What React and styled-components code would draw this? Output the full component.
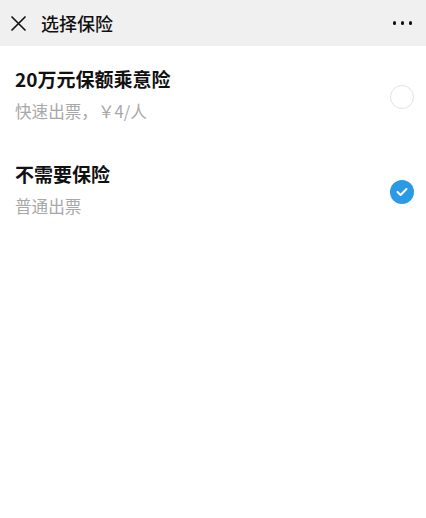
import React, { useState } from "react";
import styled, { createGlobalStyle } from "styled-components";

const Global = createGlobalStyle`
  html, body { margin: 0; padding: 0; background: #ffffff; }
  body { font-family: "Noto Sans CJK SC", "Noto Sans", sans-serif; }
`;

const Page = styled.div`
  width: 426px;
  min-height: 518px;
  background: #fff;
`;

const Header = styled.header`
  height: 46px;
  background: #f0f0f0;
  display: flex;
  align-items: center;
  padding: 0 14px 0 10px;
  box-sizing: border-box;
`;

const IconBtn = styled.span`
  display: flex;
  align-items: center;
  justify-content: center;
  width: 17px;
  height: 17px;
  margin-right: 14px;
`;

const Title = styled.h1`
  flex: 1;
  margin: 0;
  font-size: 18px;
  font-weight: 500;
  color: #111;
  line-height: 24px;
`;

const More = styled.span`
  display: flex;
  gap: 4.5px;
  align-items: center;
`;

const Dot = styled.i`
  width: 3.5px;
  height: 3.5px;
  border-radius: 50%;
  background: #111;
`;

const Item = styled.div`
  height: 95px;
  display: flex;
  align-items: center;
  padding: 0 12px 0 15px;
  box-sizing: border-box;
  cursor: pointer;
`;

const Texts = styled.div`
  flex: 1;
  display: flex;
  flex-direction: column;
  gap: 9px;
  margin-top: 2px;
`;

const ItemTitle = styled.div`
  font-size: 19px;
  font-weight: 700;
  color: #111;
  line-height: 24px;
`;

const ItemSub = styled.div`
  font-size: 16.6px;
  color: #a8a8a8;
  line-height: 22px;
`;

const Radio = styled.span`
  width: 24px;
  height: 24px;
  border-radius: 50%;
  box-sizing: border-box;
  margin-top: 6px;
  display: flex;
  align-items: center;
  justify-content: center;
  border: ${(p) => (p.$checked ? "none" : "1.5px solid #e2e2e2")};
  background: ${(p) => (p.$checked ? "#2a9ae6" : "#fff")};
`;

const options = [
  { title: "20万元保额乘意险", sub: "快速出票，￥4/人" },
  { title: "不需要保险", sub: "普通出票" },
];

export default function App() {
  const [sel, setSel] = useState(1);
  return (
    <Page>
      <Global />
      <Header>
        <IconBtn>
          <svg width="17" height="17" viewBox="0 0 17 17">
            <path d="M1.5 1.5 L15.5 15.5 M15.5 1.5 L1.5 15.5" stroke="#111" strokeWidth="1.6" fill="none" />
          </svg>
        </IconBtn>
        <Title>选择保险</Title>
        <More>
          <Dot />
          <Dot />
          <Dot />
        </More>
      </Header>
      {options.map((o, i) => (
        <Item key={i} onClick={() => setSel(i)}>
          <Texts>
            <ItemTitle>{o.title}</ItemTitle>
            <ItemSub>{o.sub}</ItemSub>
          </Texts>
          <Radio $checked={sel === i}>
            {sel === i && (
              <svg width="12" height="10" viewBox="0 0 12 10">
                <path d="M1.5 5 L4.6 8 L10.5 2" stroke="#fff" strokeWidth="2" fill="none" strokeLinecap="round" strokeLinejoin="round" />
              </svg>
            )}
          </Radio>
        </Item>
      ))}
    </Page>
  );
}
